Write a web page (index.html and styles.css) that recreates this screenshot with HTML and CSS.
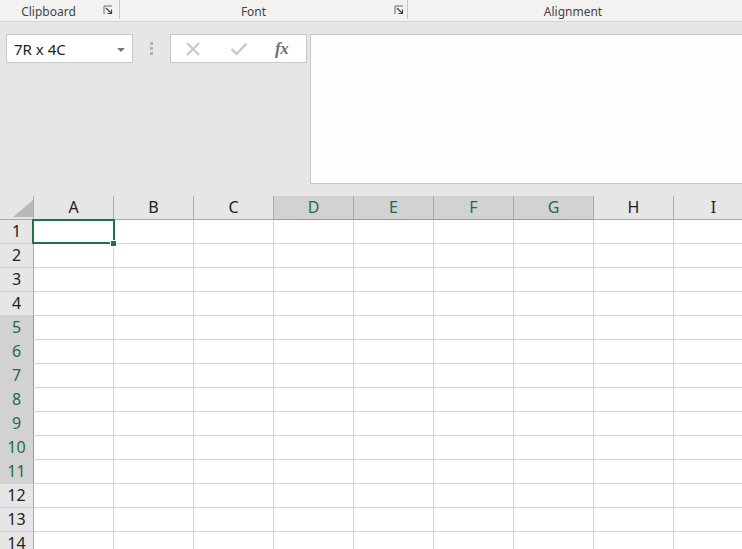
FILE: index.html
```html
<!DOCTYPE html>
<html>
<head>
<meta charset="utf-8">
<link rel="stylesheet" href="styles.css">
</head>
<body>
<div class="ribbon">
  <div class="group g-clip"><span class="glabel">Clipboard</span><svg class="launch" viewBox="0 0 10 10" width="10" height="10"><path d="M1 9V1H9" fill="none" stroke="#6a6a6a" stroke-width="1"/><path d="M3 3L8.5 8.5M8.5 4.5V8.5H4.5" fill="none" stroke="#444" stroke-width="1.2"/></svg></div>
  <div class="group g-font"><span class="glabel">Font</span><svg class="launch" viewBox="0 0 10 10" width="10" height="10"><path d="M1 9V1H9" fill="none" stroke="#6a6a6a" stroke-width="1"/><path d="M3 3L8.5 8.5M8.5 4.5V8.5H4.5" fill="none" stroke="#444" stroke-width="1.2"/></svg></div>
  <div class="group g-align"><span class="glabel">Alignment</span></div>
</div>
<div class="toolbar">
  <div class="namebox"><span class="nbtext">7R x 4C</span><span class="caret"></span></div>
  <div class="grip"><span></span><span></span><span></span></div>
  <div class="fxbox">
    <svg class="ico" viewBox="0 0 16 16" width="16" height="16"><path d="M2 2L14 14M14 2L2 14" stroke="#c6c6c6" stroke-width="1.8" fill="none"/></svg>
    <svg class="ico" viewBox="0 0 18 14" width="18" height="14"><path d="M1.5 7L6.5 12L16.5 1.5" stroke="#c6c6c6" stroke-width="2.2" fill="none"/></svg>
    <span class="fx">fx</span>
  </div>
  <div class="formula"></div>
</div>
<div class="sheet">
  <div class="hrow">
    <div class="corner"><svg viewBox="0 0 20 17" width="20" height="17"><path d="M20 0V17H0Z" fill="#b8b8b8"/></svg></div>
    <div class="ch">A</div><div class="ch">B</div><div class="ch">C</div>
    <div class="ch hl">D</div><div class="ch hl">E</div><div class="ch hl">F</div><div class="ch hl">G</div>
    <div class="ch">H</div><div class="ch">I</div>
  </div>
  <div class="row"><div class="rh">1</div><div class="c"></div><div class="c"></div><div class="c"></div><div class="c"></div><div class="c"></div><div class="c"></div><div class="c"></div><div class="c"></div><div class="c"></div></div>
  <div class="row"><div class="rh">2</div><div class="c"></div><div class="c"></div><div class="c"></div><div class="c"></div><div class="c"></div><div class="c"></div><div class="c"></div><div class="c"></div><div class="c"></div></div>
  <div class="row"><div class="rh">3</div><div class="c"></div><div class="c"></div><div class="c"></div><div class="c"></div><div class="c"></div><div class="c"></div><div class="c"></div><div class="c"></div><div class="c"></div></div>
  <div class="row"><div class="rh">4</div><div class="c"></div><div class="c"></div><div class="c"></div><div class="c"></div><div class="c"></div><div class="c"></div><div class="c"></div><div class="c"></div><div class="c"></div></div>
  <div class="row"><div class="rh hl">5</div><div class="c"></div><div class="c"></div><div class="c"></div><div class="c"></div><div class="c"></div><div class="c"></div><div class="c"></div><div class="c"></div><div class="c"></div></div>
  <div class="row"><div class="rh hl">6</div><div class="c"></div><div class="c"></div><div class="c"></div><div class="c"></div><div class="c"></div><div class="c"></div><div class="c"></div><div class="c"></div><div class="c"></div></div>
  <div class="row"><div class="rh hl">7</div><div class="c"></div><div class="c"></div><div class="c"></div><div class="c"></div><div class="c"></div><div class="c"></div><div class="c"></div><div class="c"></div><div class="c"></div></div>
  <div class="row"><div class="rh hl">8</div><div class="c"></div><div class="c"></div><div class="c"></div><div class="c"></div><div class="c"></div><div class="c"></div><div class="c"></div><div class="c"></div><div class="c"></div></div>
  <div class="row"><div class="rh hl">9</div><div class="c"></div><div class="c"></div><div class="c"></div><div class="c"></div><div class="c"></div><div class="c"></div><div class="c"></div><div class="c"></div><div class="c"></div></div>
  <div class="row"><div class="rh hl">10</div><div class="c"></div><div class="c"></div><div class="c"></div><div class="c"></div><div class="c"></div><div class="c"></div><div class="c"></div><div class="c"></div><div class="c"></div></div>
  <div class="row"><div class="rh hl">11</div><div class="c"></div><div class="c"></div><div class="c"></div><div class="c"></div><div class="c"></div><div class="c"></div><div class="c"></div><div class="c"></div><div class="c"></div></div>
  <div class="row"><div class="rh">12</div><div class="c"></div><div class="c"></div><div class="c"></div><div class="c"></div><div class="c"></div><div class="c"></div><div class="c"></div><div class="c"></div><div class="c"></div></div>
  <div class="row"><div class="rh">13</div><div class="c"></div><div class="c"></div><div class="c"></div><div class="c"></div><div class="c"></div><div class="c"></div><div class="c"></div><div class="c"></div><div class="c"></div></div>
  <div class="row"><div class="rh">14</div><div class="c"></div><div class="c"></div><div class="c"></div><div class="c"></div><div class="c"></div><div class="c"></div><div class="c"></div><div class="c"></div><div class="c"></div></div>
  <div class="sel"></div>
  <div class="handle"></div>
</div>
</body>
</html>
```

FILE: styles.css
```css
* { box-sizing: border-box; }
html, body {
  margin: 0;
  padding: 0;
  width: 742px;
  height: 549px;
  overflow: hidden;
  background: #e6e6e6;
  font-family: "Segoe UI", "Noto Sans", "Open Sans", sans-serif;
}
.ribbon {
  display: flex;
  height: 22px;
  background: #f3f2f1;
  border-bottom: 1px solid #d5d5d5;
}
.group {
  position: relative;
  display: flex;
  align-items: center;
  justify-content: center;
  border-right: 1px solid #c8c6c4;
  height: 19px;
}
.g-clip { width: 120px; }
.g-font { width: 288px; }
.g-align { width: 330px; border-right: none; }
.glabel {
  font-size: 12px;
  color: #444;
  line-height: 21px;
  margin-top: 3px;
}
.g-clip .glabel { margin-right: 22px; }
.g-font .glabel { margin-right: 20px; }
.launch {
  position: absolute;
  right: 6px;
  top: 5px;
}
.g-font .launch { right: 3px; }
.toolbar {
  display: flex;
  align-items: flex-start;
  height: 174px;
  padding: 12px 0 0 6px;
}
.namebox {
  position: relative;
  width: 127px;
  height: 29px;
  background: #fff;
  border: 1px solid #c6c6c6;
  display: flex;
  align-items: center;
  padding-left: 7px;
}
.nbtext {
  font-size: 15px;
  color: #222;
}
.caret {
  position: absolute;
  right: 7px;
  top: 13px;
  width: 0;
  height: 0;
  border-left: 4px solid transparent;
  border-right: 4px solid transparent;
  border-top: 4px solid #777;
}
.grip {
  width: 37px;
  height: 29px;
  display: flex;
  flex-direction: column;
  align-items: center;
  padding-top: 8px;
  gap: 2px;
}
.grip span {
  width: 3px;
  height: 3px;
  background: #b3b3b3;
}
.fxbox {
  width: 137px;
  height: 29px;
  background: #fff;
  border: 1px solid #c6c6c6;
  display: flex;
  align-items: center;
  padding-left: 14px;
  gap: 28px;
}
.fxbox .ico:nth-child(2) { margin-left: 1px; }
.fx {
  font-family: "Liberation Serif", "DejaVu Serif", serif;
  font-style: italic;
  font-weight: bold;
  font-size: 17px;
  color: #6f6f6f;
  letter-spacing: -0.5px;
  margin-left: -1px;
}
.formula {
  margin-left: 3px;
  flex: 1;
  height: 150px;
  background: #fdfdfd;
  border: 1px solid #c6c6c6;
  border-right: none;
}
.sheet {
  position: relative;
  background: #fff;
}
.hrow, .row {
  display: flex;
  height: 24px;
}
.hrow { background: #e6e6e6; }
.corner {
  width: 34px;
  flex: none;
  height: 24px;
  border-right: 1px solid #ababab;
  border-bottom: 1px solid #ababab;
  padding: 4px 0 0 13px;
}
.corner svg { display: block; }
.ch {
  width: 80px;
  flex: none;
  height: 24px;
  border-right: 1px solid #ababab;
  border-bottom: 1px solid #ababab;
  text-align: center;
  font-size: 16px;
  line-height: 23px;
  color: #222;
}
.ch.hl {
  background: #d2d2d2;
  color: #1e6c44;
  border-bottom-color: #9b9b9b;
}
.rh {
  width: 34px;
  flex: none;
  height: 24px;
  background: #e6e6e6;
  border-right: 1px solid #ababab;
  border-bottom: 1px solid #d0d0d0;
  text-align: center;
  font-size: 16px;
  line-height: 23px;
  color: #222;
}
.rh.hl {
  background: #d2d2d2;
  color: #1e6c44;
  border-right-color: #9b9b9b;
}
.c {
  width: 80px;
  flex: none;
  height: 24px;
  border-right: 1px solid #d4d4d4;
  border-bottom: 1px solid #d4d4d4;
}
.sel {
  position: absolute;
  left: 32px;
  top: 23px;
  width: 83px;
  height: 25px;
  border: 2px solid #217346;
}
.handle {
  position: absolute;
  left: 110px;
  top: 44px;
  width: 7px;
  height: 7px;
  background: #217346;
  border: 1px solid #fff;
}
```
